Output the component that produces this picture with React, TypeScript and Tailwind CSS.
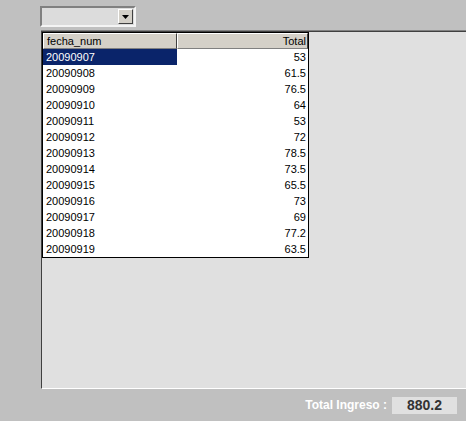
import React from "react";

const rows: [string, string][] = [
  ["20090907", "53"],
  ["20090908", "61.5"],
  ["20090909", "76.5"],
  ["20090910", "64"],
  ["20090911", "53"],
  ["20090912", "72"],
  ["20090913", "78.5"],
  ["20090914", "73.5"],
  ["20090915", "65.5"],
  ["20090916", "73"],
  ["20090917", "69"],
  ["20090918", "77.2"],
  ["20090919", "63.5"],
];

export default function App() {
  return (
    <div
      className="flex h-[421px] w-[466px] flex-col overflow-hidden bg-[#c0c0c0] text-[11px] leading-none text-black"
      style={{ fontFamily: '"Liberation Sans", Arial, sans-serif' }}
    >
      {/* combo */}
      <div className="ml-[40px] mt-[6px] flex h-[21px] w-[96px] border-2 border-t-[#808080] border-l-[#808080] border-r-[#f4f4f4] border-b-[#f4f4f4] bg-[#dcdcdc]">
        <div className="flex-1" />
        <div className="m-[1px] flex h-[15px] w-[15px] items-center justify-center border border-t-white border-l-white border-r-[#404040] border-b-[#404040] bg-[#d4d0c8]">
          <svg width="7" height="4" viewBox="0 0 7 4">
            <path d="M0 0h7L3.5 4z" fill="#000" />
          </svg>
        </div>
      </div>

      {/* panel */}
      <div className="ml-[41px] mt-[3px] h-[359px] border-t border-[#808080]">
        <div className="flex h-full flex-col border-b border-l border-t border-[#404040] border-b-white bg-[#e0e0e0]">
          <div className="w-[267px] border border-black bg-white">
            <div className="flex h-[16px]">
              <div className="flex w-[134px] items-center border border-t-white border-l-white border-r-[#404040] border-b-[#808080] bg-[#d4d0c8] pl-[3px]">
                fecha_num
              </div>
              <div className="flex flex-1 items-center justify-end border border-t-white border-l-white border-r-[#404040] border-b-[#808080] bg-[#d4d0c8] pr-[1px]">
                Total
              </div>
            </div>
            {rows.map(([fecha, total], i) => (
              <div key={fecha} className="flex h-[16px]">
                <div
                  className={
                    i === 0
                      ? "flex w-[134px] items-center bg-[#0a246a] pl-[3px] text-white"
                      : "flex w-[134px] items-center pl-[3px]"
                  }
                >
                  {fecha}
                </div>
                <div className="flex flex-1 items-center justify-end pr-[2px]">{total}</div>
              </div>
            ))}
          </div>
        </div>
      </div>

      {/* footer */}
      <div className="flex flex-1 items-center justify-end pr-[9px]">
        <span className="mr-[5px] text-[12px] font-bold text-white">Total Ingreso :</span>
        <div className="flex h-[17px] w-[65px] items-center justify-center bg-[#e0e0e0] text-[14px] font-bold text-[#333]">
          880.2
        </div>
      </div>
    </div>
  );
}
